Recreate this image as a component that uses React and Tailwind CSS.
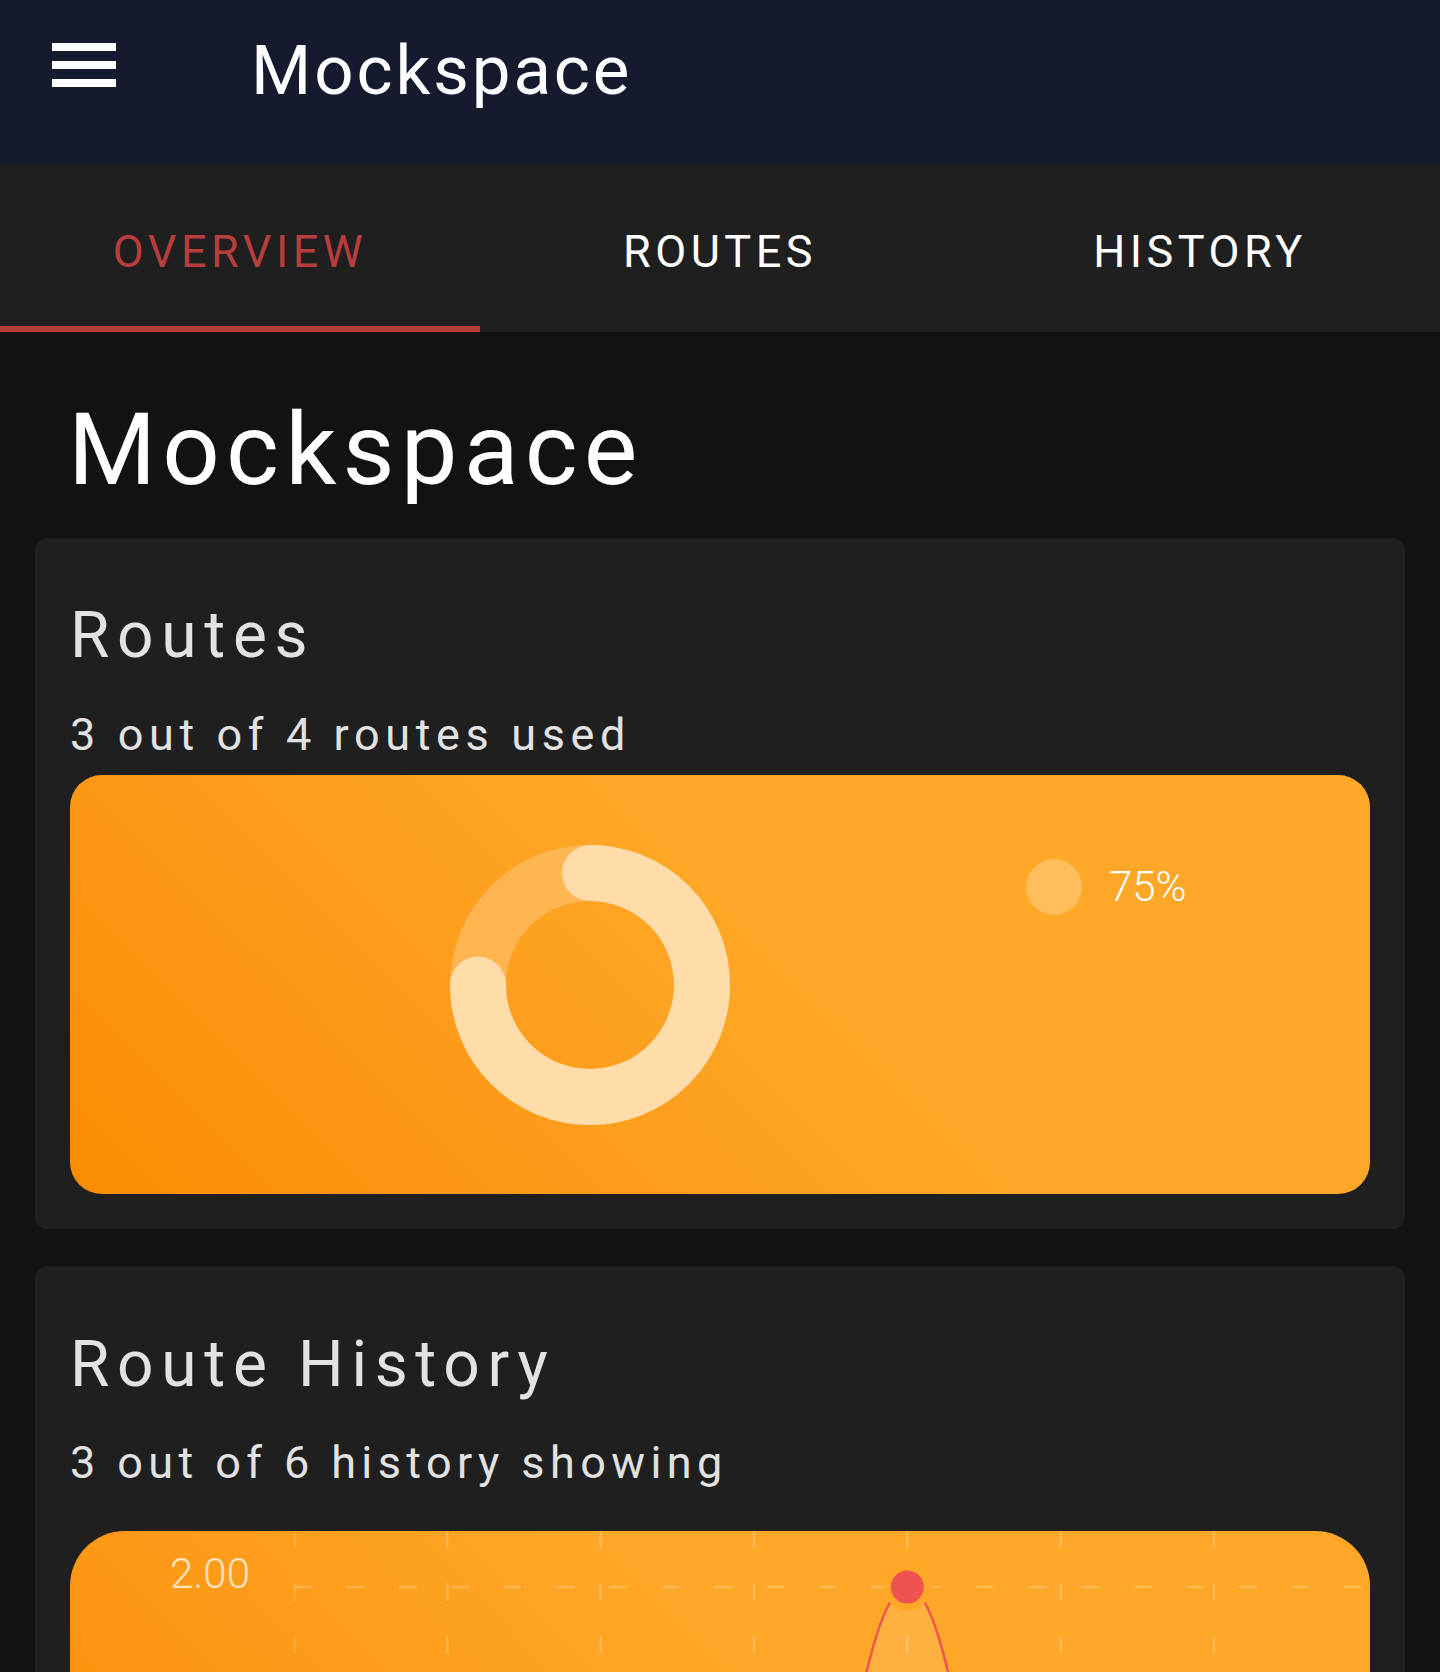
import React from "react";

const font = { fontFamily: "Roboto, 'Noto Sans', sans-serif" };

const tabs = ["OVERVIEW", "ROUTES", "HISTORY"];

const Donut = () => {
  const r = 112;
  const c = 2 * Math.PI * r;
  return (
    <svg width="280" height="280" viewBox="0 0 280 280" className="block shrink-0">
      <circle cx="140" cy="140" r={r} fill="none" stroke="rgba(255,255,255,0.22)" strokeWidth="56" />
      <circle
        cx="140"
        cy="140"
        r={r}
        fill="none"
        stroke="#ffdcaa"
        strokeWidth="56"
        strokeLinecap="round"
        strokeDasharray={`${c * 0.75} ${c}`}
        transform="rotate(-90 140 140)"
      />
    </svg>
  );
};

const HistoryChart = () => {
  const xs = [0, 1, 2, 3, 4, 5, 6].map((i) => i * 153.33);
  const px = xs[4];
  const py = 56;
  return (
    <svg width="1075" height="420" viewBox="0 0 1075 420" className="block shrink-0">
      {xs.map((x, i) => (
        <line
          key={i}
          x1={x}
          y1="0"
          x2={x}
          y2="420"
          stroke="rgba(255,255,255,0.22)"
          strokeWidth="2.5"
          strokeDasharray="17.5 35"
        />
      ))}
      <line x1="0" y1={py} x2="1070" y2={py} stroke="rgba(255,255,255,0.22)" strokeWidth="2.5" strokeDasharray="17.5 35" />
      <path
        d={`M ${px - 80} 420 L ${px - 80} ${py + 328} Q ${px - 40} ${py} ${px} ${py} Q ${px + 40} ${py} ${px + 80} ${py + 328} L ${px + 80} 420 Z`}
        fill="rgba(255,255,255,0.12)"
      />
      <path
        d={`M ${px - 80} ${py + 328} Q ${px - 40} ${py} ${px} ${py} Q ${px + 40} ${py} ${px + 80} ${py + 328}`}
        fill="none"
        stroke="#ef5350"
        strokeWidth="3"
      />
      <circle cx={px} cy={py} r="20" fill="#ef5350" stroke="#ffa726" strokeWidth="7" />
    </svg>
  );
};

export default function App() {
  return (
    <div className="h-[1672px] overflow-hidden bg-[#121212] text-white" style={font}>
      <header className="h-[163px] bg-[#151a2f] flex items-start">
        <div className="ml-[52px] mt-[43px] flex flex-col gap-[10px]">
          <div className="w-[64px] h-[8px] bg-white" />
          <div className="w-[64px] h-[8px] bg-white" />
          <div className="w-[64px] h-[8px] bg-white" />
        </div>
        <div className="ml-[135px] mt-[36px] text-[69px] leading-none tracking-[0.042em] text-white">
          Mockspace
        </div>
      </header>

      <nav className="h-[169px] bg-[#1f1f1f] grid grid-cols-3">
        {tabs.map((t, i) => (
          <div key={t} className="flex flex-col items-center">
            <div
              className={`mt-[66px] text-[45px] leading-none tracking-[0.1em] ${
                i === 0 ? "text-[#b83d3d]" : "text-white"
              }`}
            >
              {t}
            </div>
            <div className={`mt-auto h-[6px] w-full ${i === 0 ? "bg-[#b83d3d]" : ""}`} />
          </div>
        ))}
      </nav>

      <main>
        <h1 className="pl-[68px] pt-[67px] text-[101px] leading-none tracking-[0.061em] font-normal text-white">
          Mockspace
        </h1>

        <section className="mx-[35px] mt-[38px] rounded-[12px] bg-[#1f1f1f] px-[35px] pt-[66px] pb-[35px]">
          <h2 className="text-[64px] leading-none tracking-[0.12em] text-[#e2e2e2]">Routes</h2>
          <p className="mt-[44px] text-[45px] leading-none tracking-[0.125em] text-[#e2e2e2]">
            3 out of 4 routes used
          </p>
          <div className="mt-[18px] h-[419px] rounded-[32px] bg-linear-45 from-[#fb8c00] to-[#ffa726] to-55% flex items-start">
            <div className="ml-[380px] mt-[70px]">
              <Donut />
            </div>
            <div className="ml-[296px] mt-[84px] flex items-center gap-[27px]">
              <div className="w-[56px] h-[56px] rounded-full bg-white/25" />
              <span className="text-[42px] leading-none font-light text-white">75%</span>
            </div>
          </div>
        </section>

        <section className="mx-[35px] mt-[37px] rounded-[12px] bg-[#1f1f1f] px-[35px] pt-[67px] pb-[35px]">
          <h2 className="text-[64px] leading-none tracking-[0.12em] text-[#e2e2e2]">Route History</h2>
          <p className="mt-[43px] text-[45px] leading-none tracking-[0.12em] text-[#e2e2e2]">
            3 out of 6 history showing
          </p>
          <div className="mt-[46px] h-[420px] overflow-hidden rounded-[55px] bg-linear-45 from-[#fb8c00] to-[#ffa726] to-55% flex items-start">
            <div className="w-[224px] shrink-0 pl-[100px] pt-[22px] text-[42px] leading-none font-light text-[#ffe5c2]">
              2.00
            </div>
            <HistoryChart />
          </div>
        </section>
      </main>
    </div>
  );
}
